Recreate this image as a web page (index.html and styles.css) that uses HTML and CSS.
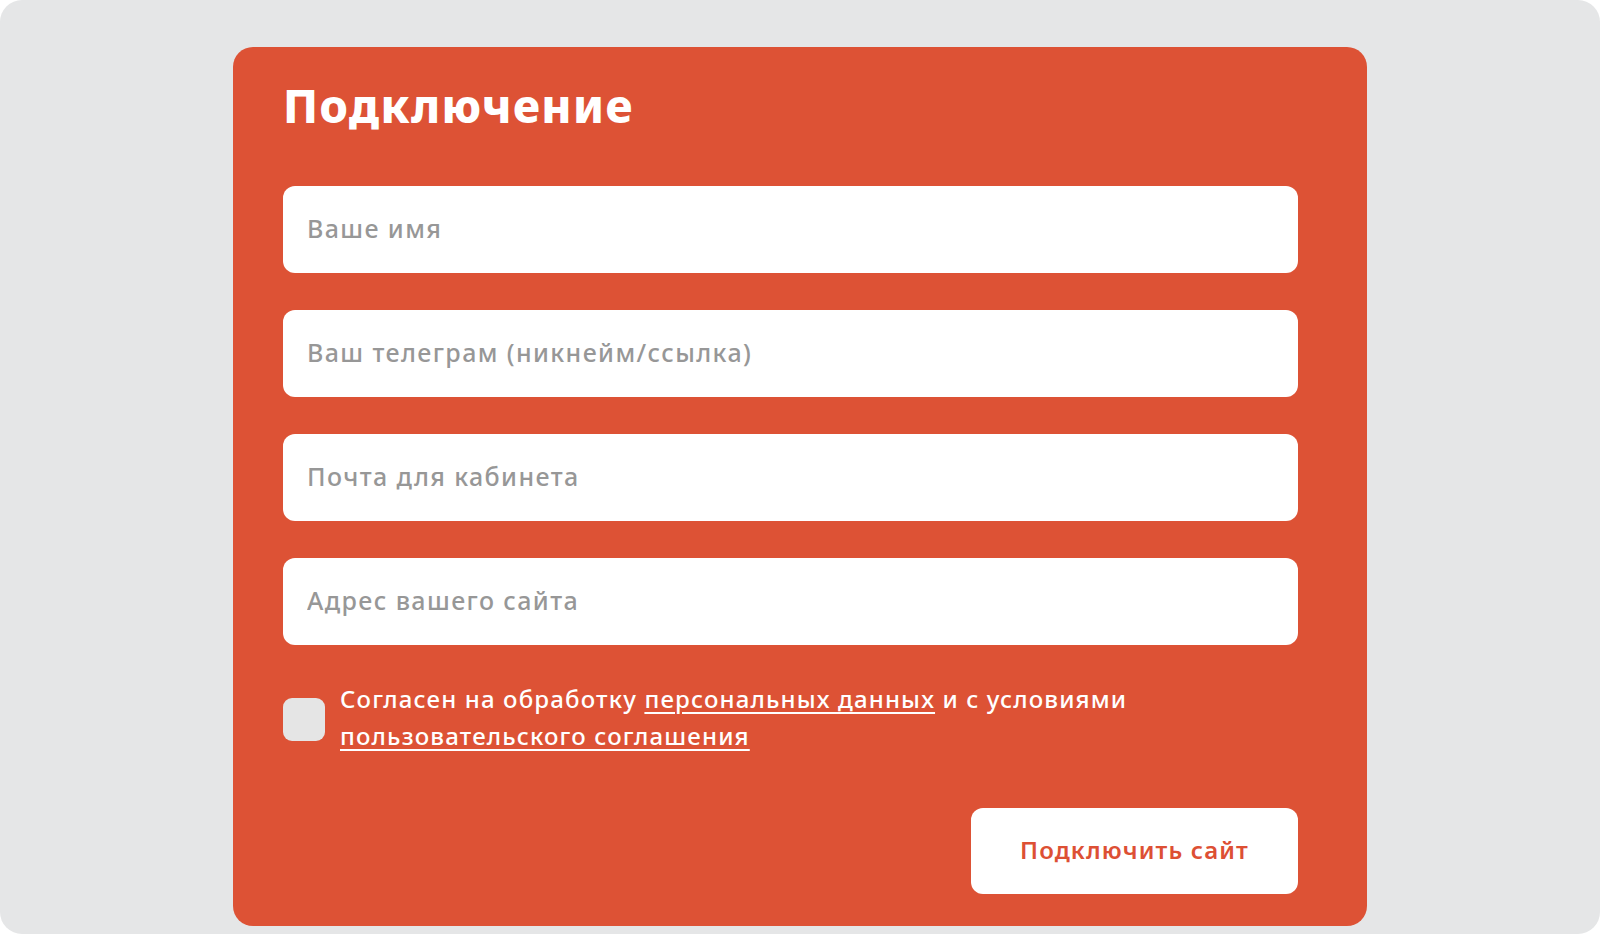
FILE: index.html
```html
<!DOCTYPE html>
<html lang="ru">
<head>
<meta charset="UTF-8">
<meta name="viewport" content="width=device-width, initial-scale=1.0">
<title>Подключение</title>
<link rel="stylesheet" href="styles.css">
</head>
<body>
<div class="screen">
    <form class="connect-card">
        <h1 class="connect-title">Подключение</h1>

        <div class="fields">
            <input class="field" type="text" placeholder="Ваше имя">
            <input class="field" type="text" placeholder="Ваш телеграм (никнейм/ссылка)">
            <input class="field" type="email" placeholder="Почта для кабинета">
            <input class="field" type="text" placeholder="Адрес вашего сайта">
        </div>

        <label class="agree">
            <input class="agree-box" type="checkbox">
            <span class="agree-text">Согласен на обработку <a href="#">персональных данных</a> и с условиями <a href="#">пользовательского соглашения</a></span>
        </label>

        <div class="actions">
            <button class="submit" type="button">Подключить сайт</button>
        </div>
    </form>
</div>
</body>
</html>
```

FILE: styles.css
```css
/* page */
body {
    margin: 0;
    background-color: #ffffff;
    font-family: "Noto Sans", "Open Sans", sans-serif;
}

.screen {
    height: 934px;
    border-radius: 22px;
    background-color: #e5e6e7;
    padding-top: 47px;
    box-sizing: border-box;
}

/* card */
.connect-card {
    width: 1134px;
    margin: 0 auto;
    padding: 30px 69px 32px 50px;
    box-sizing: border-box;
    background-color: #dd5235;
    border-radius: 20px;
}

.connect-title {
    margin: 0 0 53px;
    color: #ffffff;
    font-size: 46px;
    line-height: 56px;
    font-weight: 800;
    letter-spacing: 1.3px;
}

.fields {
    display: flex;
    flex-direction: column;
    gap: 37px;
}

.field {
    box-sizing: border-box;
    height: 87px;
    padding: 0 24px 4px;
    border: none;
    border-radius: 12px;
    background-color: #ffffff;
    font-family: inherit;
    font-size: 25px;
    font-weight: 500;
    letter-spacing: 1.4px;
    color: #333333;
    outline: none;
}

.field::placeholder {
    color: #979797;
}

/* consent */
.agree {
    display: flex;
    align-items: center;
    gap: 15px;
    margin-top: 35px;
    color: #ffffff;
    font-size: 24px;
    line-height: 37px;
    font-weight: 500;
    letter-spacing: 1.15px;
}

.agree-box {
    appearance: none;
    flex: none;
    width: 42px;
    height: 43px;
    margin: 4px 0 0;
    border-radius: 9px;
    background-color: #e5e5e5;
}

.agree-text a {
    color: #ffffff;
    text-decoration: underline;
    text-decoration-thickness: 2px;
    text-underline-offset: 4px;
}

/* button */
.actions {
    display: flex;
    justify-content: flex-end;
    margin-top: 54px;
}

.submit {
    box-sizing: border-box;
    width: 327px;
    height: 86px;
    padding: 0 0 4px;
    border: none;
    border-radius: 12px;
    background-color: #ffffff;
    color: #dd5034;
    font-family: inherit;
    font-size: 24px;
    font-weight: 600;
    letter-spacing: 1.15px;
    cursor: pointer;
}
```
